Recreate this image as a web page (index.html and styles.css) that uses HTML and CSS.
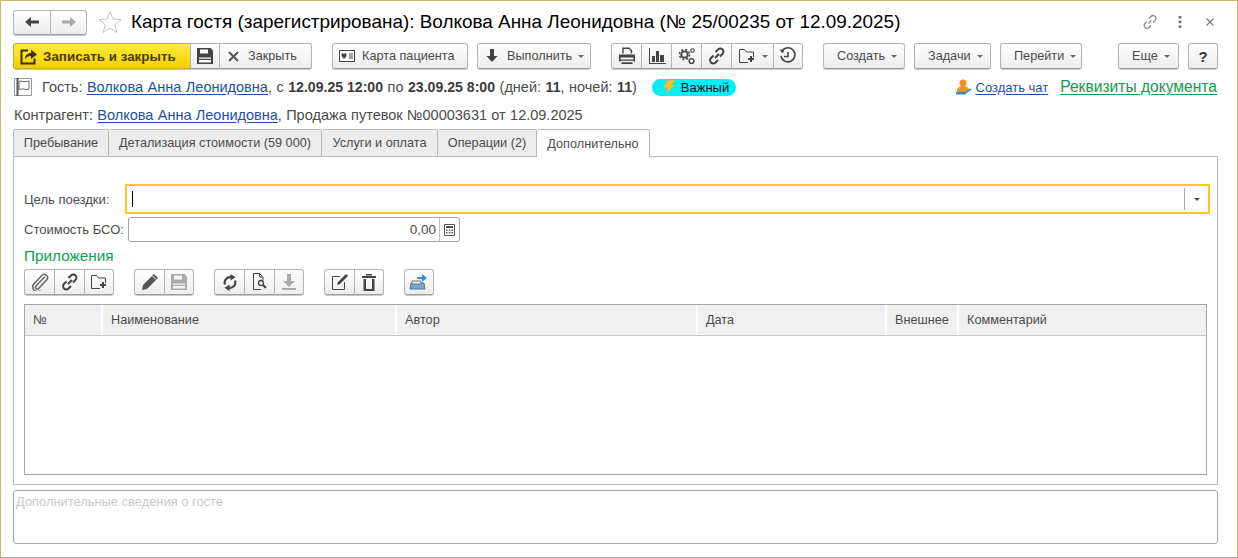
FILE: index.html
```html
<!DOCTYPE html>
<html lang="ru">
<head>
<meta charset="utf-8">
<title>Карта гостя</title>
<link rel="stylesheet" href="styles.css">
</head>
<body>
<div class="window">
  <header class="titlebar">
    <div class="btn-group nav">
      <button class="btn icon-btn w37"><svg width="16" height="14" viewBox="0 0 16 14"><path d="M1 7l6-5v3.500h8v3H7V12z" fill="#444"/></svg></button>
      <button class="btn icon-btn w37"><svg width="16" height="14" viewBox="0 0 16 14"><path d="M15 7L9 2v3.500H1v3h8V12z" fill="#aaa"/></svg></button>
    </div>
    <svg class="star" width="24" height="24" viewBox="0 0 24 24"><path d="M12 1.500l3 7.500 8 .6-6.200 5.100 2 7.800L12 18.200 5.200 22.500l2-7.800L1 9.600l8-.6z" fill="#fff" stroke="#c4c4c4"/></svg>
    <h1 class="title">Карта гостя (зарегистрирована): Волкова Анна Леонидовна (№ 25/00235 от 12.09.2025)</h1>
    <div class="win-tools">
      <svg class="tool-link" width="16" height="16" viewBox="0 0 16 16" fill="none" stroke="#888" stroke-width="1.200"><path d="M6.500 9.500l3-3M7 4.500l2-2a2.800 2.800 0 0 1 4 4l-2 2M9 11.500l-2 2a2.800 2.800 0 0 1-4-4l2-2"/></svg>
      <svg width="4" height="12" viewBox="0 0 4 12" fill="#777"><rect x="0.500" width="3" height="2.500"/><rect x="0.500" y="4.700" width="3" height="2.500"/><rect x="0.500" y="9.400" width="3" height="2.500"/></svg>
      <svg width="8" height="8" viewBox="0 0 8 8" stroke="#777" stroke-width="1.100"><path d="M.5.500l7 7M7.500.5l-7 7"/></svg>
    </div>
  </header>

  <div class="toolbar">
    <div class="btn-group">
      <button class="btn btn-primary"><svg width="17" height="17" viewBox="0 0 17 17" fill="none"><path d="M8 2.500H1.500v13h13v-5" stroke="#3d3100" stroke-width="2"/><path d="M5 11c0-4 3-6 6-6V1.500L17 6.500 11 11V8C9 8 6.500 9 5 11z" fill="#3d3100"/></svg>Записать и закрыть</button>
      <button class="btn icon-btn w29"><svg width="16" height="16" viewBox="0 0 16 16"><path d="M.5 0h13L16 2.500V16H0V0z" fill="#444"/><path d="M3 1.500h8v4H3zM2 9.500h12v1.200H2zM2 12h12v2.500H2z" fill="#fff"/></svg></button>
      <button class="btn w93 start p8"><svg class="mr9" width="11" height="11" viewBox="0 0 11 11" stroke="#555" stroke-width="2"><path d="M1 1l9 9M10 1l-9 9"/></svg>Закрыть</button>
    </div>
    <button class="btn w136 ml20 start p6"><svg class="mr7" width="16" height="12" viewBox="0 0 16 12"><rect x=".5" y=".5" width="15" height="11" fill="#fff" stroke="#444"/><path d="M5 9L2.500 6V4l1-1 1.500 1 1.500-1 1 1v2z" fill="#444"/><path d="M10 4h4M10 6h4M10 8h4" stroke="#444"/></svg>Карта пациента</button>
    <button class="btn w114 ml9 start p8"><svg class="mr9" width="12" height="14" viewBox="0 0 12 14" fill="#444"><path d="M4 0h4v7h3.500L6 13 .5 7H4z"/></svg>Выполнить<i class="caret"></i></button>
    <div class="btn-group ml20">
      <button class="btn icon-btn w30"><svg width="18" height="18" viewBox="0 0 18 18" fill="#444"><path d="M5 6.500V1.200h6l2.500 2.500v2.800" fill="none" stroke="#444" stroke-width="1.400"/><path d="M1 7.500h16v3H1zM1 10.500h1.600v4H1zM15.400 10.500H17v4h-1.600zM1 12.500h16v1.300H1zM3.500 15.300h11V17h-11z"/></svg></button>
      <button class="btn icon-btn w30"><svg width="18" height="18" viewBox="0 0 18 18" fill="#444"><path d="M1 1h1v15h16v1H1z"/><path d="M4 9h3v6H4zM8 4h3v11H8zM12 8h4v7h-4z"/></svg></button>
      <button class="btn icon-btn w30"><svg width="18" height="18" viewBox="0 0 18 18" fill="none" stroke="#444"><circle cx="6.500" cy="7.500" r="3.200" stroke-width="1.800"/><circle cx="6.500" cy="7.500" r="5" stroke-width="1.500" stroke-dasharray="2 1.930"/><circle cx="13.500" cy="14" r="2.400" stroke-width="1.400"/><circle cx="14.500" cy="3.500" r="1.800" stroke-width="1.100"/></svg></button>
      <button class="btn icon-btn w30"><svg width="18" height="18" viewBox="0 0 18 18" fill="none" stroke="#444" stroke-width="2"><path d="M7 11l4-4M7.500 5l2.500-2.500a3 3 0 0 1 4.500 4.500L12 9.500M10 13l-2.500 2.500a3 3 0 0 1-4.500-4.500L5.500 8.500"/></svg></button>
      <button class="btn icon-btn w42"><svg width="18" height="16" viewBox="0 0 18 16" fill="none" stroke="#444"><path d="M10 14.500H1.500v-13h5l2 2.500h7v5"/><path d="M13 8v6M10 11h6" stroke-width="2"/></svg><i class="caret"></i></button>
      <button class="btn icon-btn w30"><svg width="18" height="18" viewBox="0 0 18 18" fill="none" stroke="#444" stroke-width="1.600"><path d="M2.500 5A7 7 0 1 1 2 9"/><path d="M9 5v4.500H5"/><path d="M.5 2.500l4.500.5-1 3.500z" fill="#444" stroke="none"/></svg></button>
    </div>
    <button class="btn w82 ml20 start p13">Создать<i class="caret"></i></button>
    <button class="btn w77 ml9 start p13">Задачи<i class="caret"></i></button>
    <button class="btn w82 ml9 start p13">Перейти<i class="caret"></i></button>
    <button class="btn w61 ml36 start p13">Еще<i class="caret"></i></button>
    <button class="btn w30 ml9 help">?</button>
  </div>

  <div class="info-row">
    <svg class="flag" width="18" height="18" viewBox="0 0 18 18" fill="none" stroke="#666"><path d="M.5.500h17v17H.5z" stroke="#999"/><path d="M3.500 0v18" stroke="#555" stroke-width="2"/><path d="M5 3.500c3-1.500 4 1 7 0l3-.5v8c-3 1.500-5-.5-7 0l-3 .5z" fill="#fff"/></svg>
    <span class="info-text">Гость: <a class="link" href="#">Волкова Анна Леонидовна</a>, с <b>12.09.25 12:00</b> по <b>23.09.25 8:00</b> (дней: <b>11</b>, ночей: <b>11</b>)</span>
    <span class="pill"><svg width="16" height="16" viewBox="0 0 16 16"><path d="M7 1h8L10 6h4L5 15l2-6H2z" fill="#f2c23e" stroke="#d9a441" stroke-width=".6"/></svg>Важный</span>
    <svg class="chat-icon" width="18" height="18" viewBox="0 0 18 18"><circle cx="8" cy="5" r="3.500" fill="#f0941e"/><path d="M2 14c0-5 3-6 6-6s5 1 6 3l-4 3z" fill="#f0941e"/><path d="M1 14h9l1 2.500H1z" fill="#3c87c8"/><path d="M10 15l6-4" stroke="#3c87c8" stroke-width="2"/></svg>
    <a class="link chat-link" href="#">Создать чат</a>
    <a class="link-green" href="#">Реквизиты документа</a>
  </div>

  <div class="contractor">Контрагент: <a class="link" href="#">Волкова Анна Леонидовна</a>, Продажа путевок №00003631 от 12.09.2025</div>

  <nav class="tabs">
    <div class="tab w96">Пребывание</div>
    <div class="tab w213">Детализация стоимости (59 000)</div>
    <div class="tab w116">Услуги и оплата</div>
    <div class="tab w99">Операции (2)</div>
    <div class="tab tab-active w113">Дополнительно</div>
  </nav>

  <main class="panel">
    <div class="field-row purpose">
      <label class="field-label l-purpose">Цель поездки:</label>
      <div class="select-input">
        <span class="cursor"></span>
        <span class="select-btn"><i class="caret dark"></i></span>
      </div>
    </div>
    <div class="field-row">
      <label class="field-label l-cost">Стоимость БСО:</label>
      <div class="num-input">
        <span class="num-value">0,00</span>
        <span class="num-btn"><svg width="11" height="12" viewBox="0 0 11 12"><path d="M.5.500h10v11H.5z" fill="#fff" stroke="#555"/><path d="M2 2h7v2H2z" fill="#555"/><path d="M2 5.500h1.500V7H2zM4.800 5.500h1.500V7H4.800zM7.500 5.500H9V7H7.500zM2 8h1.500v1.500H2zM4.800 8h1.500v1.500H4.800zM7.500 8H9v1.500H7.500z" fill="#555"/></svg></span>
      </div>
    </div>
    <h2 class="section">Приложения</h2>
    <div class="att-toolbar">
      <div class="btn-group">
        <button class="btn icon-btn w30"><svg width="18" height="18" viewBox="0 0 18 18" fill="none" stroke="#666" stroke-width="1.500"><path d="M14 3.500L5 13a1.800 1.800 0 0 0 2.600 2.500L16 6.500A3.300 3.300 0 0 0 11.300 2L2.800 11a4.700 4.700 0 0 0 6.700 6.500"/></svg></button>
        <button class="btn icon-btn w30"><svg width="18" height="18" viewBox="0 0 18 18" fill="none" stroke="#444" stroke-width="2"><path d="M7 11l4-4M7.500 5l2.500-2.500a3 3 0 0 1 4.500 4.500L12 9.500M10 13l-2.500 2.500a3 3 0 0 1-4.500-4.500L5.500 8.500"/></svg></button>
        <button class="btn icon-btn w30"><svg width="18" height="16" viewBox="0 0 18 16" fill="none" stroke="#444"><path d="M10 14.500H1.500v-13h5l2 2.500h7v5"/><path d="M13 8v6M10 11h6" stroke-width="2"/></svg></button>
      </div>
      <div class="btn-group ml20">
        <button class="btn icon-btn w30"><svg width="18" height="18" viewBox="0 0 18 18" fill="#555"><path d="M13 1l4 4L6 16l-5 1 1-5z"/><path d="M11.500 3l3.500 3.500" stroke="#fff"/></svg></button>
        <button class="btn icon-btn w30 off"><svg width="16" height="16" viewBox="0 0 16 16"><path d="M.5 0h13L16 2.500V16H0V0z" fill="#aaa"/><path d="M3 1.500h8v4H3zM2 9.500h12v1.200H2zM2 12h12v2.500H2z" fill="#f4f4f4"/></svg></button>
      </div>
      <div class="btn-group ml20">
        <button class="btn icon-btn w30"><svg width="14" height="17" viewBox="0 0 14 17" fill="none" stroke="#444" stroke-width="2.200"><path d="M2 10.500A5.500 5.500 0 0 1 8 3.200"/><path d="M12 6.500A5.500 5.500 0 0 1 6 13.800"/><path d="M7.500 0l5 3.200-5 3.200zM6.500 10.600v6.400l-5-3.200z" fill="#444" stroke="none"/></svg></button>
        <button class="btn icon-btn w30"><svg width="16" height="18" viewBox="0 0 16 18" fill="none" stroke="#444"><path d="M9 16.500H1.500V.5h6L11 4v3M7.500.5V4H11"/><circle cx="9" cy="10" r="2.500" stroke-width="1.300"/><path d="M11 12l3 3" stroke-width="2"/></svg></button>
        <button class="btn icon-btn w30 off"><svg width="14" height="16" viewBox="0 0 14 16" fill="#aaa"><path d="M5 0h4v7h4l-6 6-6-6h4zM0 14h14v2H0z"/></svg></button>
      </div>
      <div class="btn-group ml20">
        <button class="btn icon-btn w30"><svg width="18" height="18" viewBox="0 0 18 18" fill="none" stroke="#444"><path d="M13.500 9v7.500h-12v-13H9"/><path d="M15 1l2 2-8 8-3 1 1-3z" fill="#444" stroke="none"/></svg></button>
        <button class="btn icon-btn w30"><svg width="14" height="17" viewBox="0 0 14 17" fill="#444"><path d="M0 2h14v2H0zM4 0h6v1.500H4zM1.500 5H4v10h6V5h2.500v12h-11z"/></svg></button>
      </div>
      <button class="btn icon-btn w30 ml20"><svg width="20" height="18" viewBox="0 0 20 18"><path d="M2 10h13l1 6H1z" fill="#7aa4c8" stroke="#54779a"/><path d="M3 8h9v3H3z" fill="#e9e9e9" stroke="#777"/><path d="M8 4h5V1l5 4-5 4V6H8z" fill="#2f8fe0"/></svg></button>
    </div>
    <div class="grid">
      <div class="grid-head">
        <div class="col c1">№</div>
        <div class="col c2">Наименование</div>
        <div class="col c3">Автор</div>
        <div class="col c4">Дата</div>
        <div class="col c5">Внешнее</div>
        <div class="col c6">Комментарий</div>
      </div>
    </div>
  </main>

  <div class="notes">Дополнительные сведения о госте</div>
</div>
</body>
</html>
```
FILE: styles.css
```css
* { box-sizing: border-box; }
html, body { margin: 0; padding: 0; }
body {
  width: 1238px;
  height: 558px;
  overflow: hidden;
  background: #fff;
  font-family: "Liberation Sans", Arial, sans-serif;
  font-size: 14.500px;
  color: #4b4b4b;
}
.window {
  width: 1238px;
  height: 558px;
  padding: 8px 19px 0 12px;
  border-top: 1px solid #c9b866;
  border-left: 1px solid #c9b866;
  border-right: 1px solid #c9b866;
  border-bottom: 1px solid #a5a5a5;
}
.titlebar { display: flex; align-items: center; height: 26px; width: 1205px; }
.nav { height: 25px; }
.star { margin-left: 11px; flex: none; }
.title {
  margin: 0 0 0 9px;
  font-size: 18.920px;
  font-weight: 400;
  color: #000;
  white-space: nowrap;
}
.win-tools { display: flex; align-items: center; gap: 24px; margin-left: auto; margin-right: 4px; }
.tool-link { margin-right: -4px; }

.btn-group { display: flex; flex: none; }
.btn {
  display: flex;
  align-items: center;
  justify-content: center;
  flex: none;
  height: 26px;
  padding: 0;
  border: 1px solid #b4b4b4;
  border-bottom-color: #9e9e9e;
  border-radius: 3px;
  background: linear-gradient(#ffffff, #ececec);
  box-shadow: 0 1px 0 #c8c8c8;
  font: 12.700px "Liberation Sans", Arial, sans-serif;
  color: #4b4b4b;
}
.btn-group .btn { border-radius: 0; border-right: 0; }
.btn-group .btn:first-child { border-radius: 3px 0 0 3px; }
.btn-group .btn:last-child { border-radius: 0 3px 3px 0; border-right: 1px solid #b4b4b4; }
.nav .btn { height: 25px; }
.btn-primary {
  justify-content: flex-start;
  width: 177px;
  padding-left: 6px;
  gap: 6px;
  background: linear-gradient(#ffec3d, #f6cf00);
  border-color: #d0ae00;
  font-size: 13.400px;
  font-weight: 700;
  color: #4a3c00;
}
.off { background: linear-gradient(#fbfbfb, #efefef); }
.start { justify-content: flex-start; }
.p6 { padding-left: 6px; }
.p8 { padding-left: 8px; }
.p13 { padding-left: 13px; }
.mr7 { margin-right: 7px; }
.mr9 { margin-right: 9px; }
.caret {
  display: inline-block;
  width: 0;
  height: 0;
  margin-left: 6px;
  border: 3px solid transparent;
  border-top: 3px solid #666;
  border-bottom: 0;
}
.caret.dark { margin: 0; border-top-color: #444; }
.help { font-size: 15px; font-weight: 700; color: #333; }

.w29 { width: 29px; }
.w30 { width: 30px; }
.w37 { width: 37px; }
.w42 { width: 42px; }
.w61 { width: 61px; }
.w77 { width: 77px; }
.w82 { width: 82px; }
.w93 { width: 93px; }
.w96 { width: 96px; }
.w99 { width: 99px; }
.w113 { width: 113px; }
.w114 { width: 114px; }
.w116 { width: 116px; }
.w136 { width: 136px; }
.w213 { width: 213px; }
.ml9 { margin-left: 9px; }
.ml20 { margin-left: 20px; }
.ml36 { margin-left: 36px; }

.toolbar { display: flex; margin-top: 8px; height: 26px; }

.info-row {
  display: flex;
  align-items: center;
  width: 1204px;
  margin-top: 9px;
  height: 18px;
  white-space: nowrap;
}
.flag { flex: none; margin-left: 1px; }
.info-text { margin-left: 10px; word-spacing: .5px; }
.info-text b { color: #3c3c3c; font-size: 14.100px; word-spacing: 0; }
.link { color: #1e4fa8; text-decoration: underline; text-underline-offset: 2px; }
.pill {
  display: flex;
  align-items: center;
  flex: none;
  height: 17px;
  width: 84px;
  margin-left: 15px;
  padding-left: 9px;
  gap: 4px;
  border-radius: 9px;
  background: #00f0f8;
  color: #111;
  font-size: 13px;
}
.chat-icon { margin-left: auto; flex: none; }
.chat-link { margin-left: 3px; font-size: 13px; }
.link-green {
  margin-left: 12px;
  font-size: 15.600px;
  color: #0da04c;
  text-decoration: underline;
  text-underline-offset: 2px;
}
.contractor { margin-top: 11px; padding-left: 1px; height: 17px; line-height: 17px; white-space: nowrap; word-spacing: .3px; }

.tabs { display: flex; height: 28px; margin-top: 5px; position: relative; }
.tab {
  display: flex;
  align-items: center;
  justify-content: center;
  height: 28px;
  border: 1px solid #b8b8b8;
  border-left: 0;
  border-radius: 2px 2px 0 0;
  background: #ececec;
  font-size: 12.700px;
}
.tab:first-child { border-left: 1px solid #b8b8b8; }
.tab-active { height: 29px; padding-bottom: 1px; background: #fff; border-bottom: 0; z-index: 1; }

.panel {
  width: 1205px;
  height: 329px;
  margin-top: -1px;
  padding: 27px 10px 0 10px;
  border: 1px solid #b8b8b8;
}
.field-row { display: flex; align-items: center; }
.purpose { height: 30px; margin-bottom: 3px; }
.field-label { font-size: 13px; white-space: nowrap; }
.l-purpose { width: 101px; }
.l-cost { width: 104px; }
.select-input {
  display: flex;
  align-items: center;
  justify-content: space-between;
  flex: none;
  width: 1085px;
  height: 30px;
  margin-right: -3px;
  padding-left: 5px;
  border: 2px solid #fbc91c;
}
.cursor { width: 1px; height: 16px; background: #000; }
.select-btn {
  display: flex;
  align-items: center;
  justify-content: center;
  width: 24px;
  height: 22px;
  border-left: 1px solid #aaa;
}
.num-input {
  display: flex;
  align-items: center;
  justify-content: flex-end;
  width: 332px;
  height: 25px;
  border: 1px solid #a5a5a5;
  border-radius: 3px;
}
.num-value { padding-right: 3px; font-size: 13.500px; }
.num-btn {
  display: flex;
  align-items: center;
  justify-content: center;
  width: 20px;
  height: 23px;
  border-left: 1px solid #c0c0c0;
}
.section {
  margin: 4px 0 3px;
  height: 20px;
  line-height: 20px;
  font-size: 15.300px;
  font-weight: 400;
  color: #0da04c;
}
.att-toolbar { display: flex; height: 26px; }
.grid { height: 171px; margin-top: 9px; border: 1px solid #a5a5a5; }
.grid-head {
  display: flex;
  height: 31px;
  border-bottom: 1px solid #c8c8c8;
}
.col {
  display: flex;
  align-items: center;
  padding-left: 8px;
  background: #f0f0f0;
  border-right: 2px solid #fff;
  font-size: 12.700px;
}
.c1 { width: 78px; }
.c2 { width: 294px; }
.c3 { width: 301px; }
.c4 { width: 189px; }
.c5 { width: 72px; }
.c6 { flex: 1; border-right: 0; }
.notes {
  width: 1205px;
  height: 54px;
  margin-top: 5px;
  padding: 3px 2px;
  border: 1px solid #a5a5a5;
  border-radius: 3px;
  font-size: 12.900px;
  color: #c8c8c8;
}
```
